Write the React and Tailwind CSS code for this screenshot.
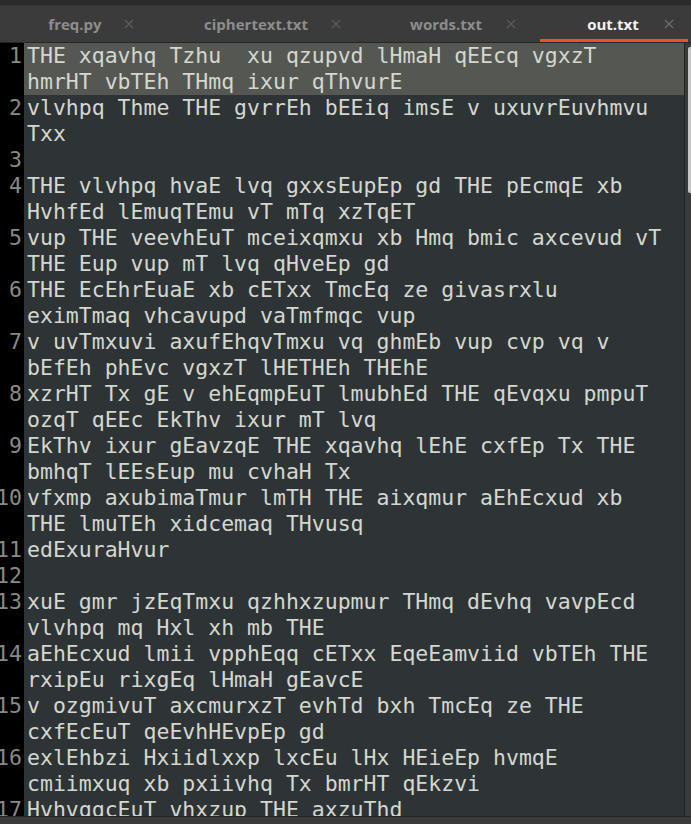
import React from "react";

const tabs = [
  { name: "freq.py", pl: 30, w: 90, gap: 0, pr: 10 },
  { name: "ciphertext.txt", pl: 38, w: 140, gap: 1, pr: 10 },
  { name: "words.txt", pl: 41, w: 100, gap: 6, pr: 20 },
  { name: "out.txt", pl: 33, w: 80, gap: 7, pr: 10, active: true },
];

// one entry per numbered line, each holding its wrapped rows
const lines = [
  ["THE xqavhq Tzhu  xu qzupvd lHmaH qEEcq vgxzT", "hmrHT vbTEh THmq ixur qThvurE"],
  ["vlvhpq Thme THE gvrrEh bEEiq imsE v uxuvrEuvhmvu", "Txx"],
  [""],
  ["THE vlvhpq hvaE lvq gxxsEupEp gd THE pEcmqE xb", "HvhfEd lEmuqTEmu vT mTq xzTqET"],
  ["vup THE veevhEuT mceixqmxu xb Hmq bmic axcevud vT", "THE Eup vup mT lvq qHveEp gd"],
  ["THE EcEhrEuaE xb cETxx TmcEq ze givasrxlu", "eximTmaq vhcavupd vaTmfmqc vup"],
  ["v uvTmxuvi axufEhqvTmxu vq ghmEb vup cvp vq v", "bEfEh phEvc vgxzT lHETHEh THEhE"],
  ["xzrHT Tx gE v ehEqmpEuT lmubhEd THE qEvqxu pmpuT", "ozqT qEEc EkThv ixur mT lvq"],
  ["EkThv ixur gEavzqE THE xqavhq lEhE cxfEp Tx THE", "bmhqT lEEsEup mu cvhaH Tx"],
  ["vfxmp axubimaTmur lmTH THE aixqmur aEhEcxud xb", "THE lmuTEh xidcemaq THvusq"],
  ["edExuraHvur"],
  [""],
  ["xuE gmr jzEqTmxu qzhhxzupmur THmq dEvhq vavpEcd", "vlvhpq mq Hxl xh mb THE"],
  ["aEhEcxud lmii vpphEqq cETxx EqeEamviid vbTEh THE", "rxipEu rixgEq lHmaH gEavcE"],
  ["v ozgmivuT axcmurxzT evhTd bxh TmcEq ze THE", "cxfEcEuT qeEvhHEvpEp gd"],
  ["exlEhbzi Hxiidlxxp lxcEu lHx HEieEp hvmqE", "cmiimxuq xb pxiivhq Tx bmrHT qEkzvi"],
  ["HvhvqqcEuT vhxzup THE axzuThd"],
];

const CloseX = ({ active }) => (
  <svg width="10" height="10" viewBox="0 0 10 10">
    <path
      d="M1 1 L9 9 M9 1 L1 9"
      stroke={active ? "#6e6e6e" : "#5e5e5e"}
      strokeWidth="1.2"
    />
  </svg>
);

export default function App() {
  return (
    <div className="w-[691px] h-[824px] bg-[#2e3436] flex flex-col overflow-hidden">
      <div className="h-[6px] bg-[#2b2b2b] border-b border-[#333]" />

      {/* tabs */}
      <div className="h-[36px] bg-[#3b3b3b] flex font-['Open_Sans',sans-serif] font-bold text-[15px]">
        {tabs.map((t) => (
          <div
            key={t.name}
            className={`flex items-center border-b-[3px] ${
              t.active ? "border-[#e95420]" : "border-transparent"
            }`}
            style={{ paddingLeft: t.pl, paddingRight: t.pr }}
          >
            <span
              className={`text-center whitespace-nowrap pt-[3px] ${
                t.active ? "text-[#f2f2f2]" : "text-[#8d8d8d]"
              }`}
              style={{ width: t.w }}
            >
              {t.name}
            </span>
            <span
              className="w-[18px] flex justify-center pt-[3px]"
              style={{ marginLeft: t.gap }}
            >
              <CloseX active={t.active} />
            </span>
          </div>
        ))}
      </div>
      <div className="h-px bg-[#262626]" />

      {/* editor */}
      <div className="flex-1 flex min-h-0">
        <div className="flex-1 overflow-hidden font-['DejaVu_Sans_Mono',monospace] text-[21.5px] leading-[26px]">
          {lines.map((rows, i) => (
            <div key={i} className="flex">
              <div className="w-[24px] shrink-0 bg-black pr-[2px] text-[#888a85] overflow-hidden whitespace-nowrap flex justify-end">
                <span>{i + 1}</span>
              </div>
              <div
                className={`flex-1 pl-[3px] text-[#d3d7cf] whitespace-pre ${
                  i === 0 ? "bg-[#555753]" : ""
                }`}
              >
                {rows.map((r, j) => (
                  <div key={j} className="h-[26px]">
                    {r}
                  </div>
                ))}
              </div>
            </div>
          ))}
        </div>

        {/* scrollbar */}
        <div className="w-[7px] border-l border-[#1f2324] bg-[#3a3a3a] flex flex-col items-end pt-[4px]">
          <div className="w-[3px] h-[146px] bg-[#c6c6c6] rounded-l-[2px]" />
        </div>
      </div>

      <div className="h-[8px] bg-[#3b3b3b] border-t border-[#262626]" />
    </div>
  );
}
